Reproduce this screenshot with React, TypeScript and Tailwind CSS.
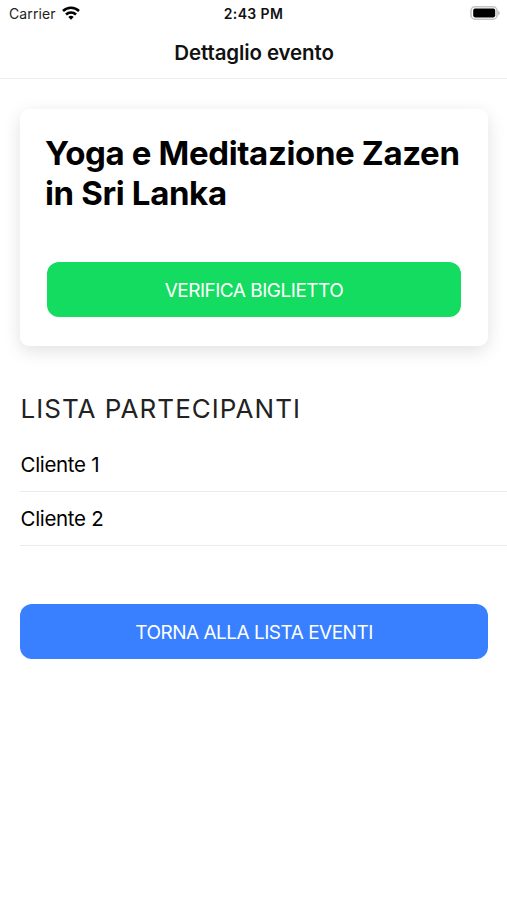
export default function App() {
  return (
    <div className="flex h-[900px] w-full flex-col overflow-hidden bg-white font-['Inter','Liberation_Sans',sans-serif] text-black">
      <header className="h-[79px] shrink-0 border-b border-[#eeeeee]">
        <div className="grid h-[26px] grid-cols-3 items-center pr-[7px] pl-[9px] text-[14px]">
          <div className="flex items-center gap-[6px]">
            <span className="pt-px tracking-[0.12px] text-[#222]">Carrier</span>
            <svg width="18" height="14" viewBox="0 0 18 14" fill="none" stroke="black" strokeWidth="2.6">
              <path d="M1 5a11.5 11.5 0 0 1 16 0" />
              <path d="M4 8.5a7.2 7.2 0 0 1 10 0" />
              <path d="M9 13.8 6.3 11.1a3.8 3.8 0 0 1 5.4 0Z" fill="black" stroke="none" />
            </svg>
          </div>
          <span className="pt-px pr-[2px] text-center font-semibold tracking-[0.4px] text-[#111]">2:43 PM</span>
          <svg className="justify-self-end" width="30" height="14" viewBox="0 0 30 14">
            <rect x="1" y="0.8" width="26" height="12.4" rx="4" fill="#fff" stroke="#c4c4c4" strokeWidth="1.6" />
            <rect x="3.2" y="2.6" width="22" height="8.8" rx="1.8" />
            <path d="M28.2 4.5c2 .8 2 4.2 0 5Z" fill="#b8b8b8" />
          </svg>
        </div>
        <h1 className="flex h-[52px] items-center justify-center pt-[3px] pl-px text-[20.5px] font-semibold tracking-[-0.12px] text-[#111]">Dettaglio evento</h1>
      </header>
      <main>
        <section className="mr-[19px] ml-5 mt-[30px] h-[237px] rounded-[9px] px-[25px] pt-6 shadow-[0_5px_18px_rgba(0,0,0,0.12)]">
          <h2 className="text-[33px] leading-[40px] font-bold tracking-[-0.36px] whitespace-nowrap">Yoga e Meditazione Zazen<br />in Sri Lanka</h2>
          <button className="mx-[2px] mt-[49px] flex h-[55px] w-[414px] items-center justify-center rounded-[12px] bg-[#14dc60] pt-[3px] text-[19px] tracking-[-0.5px] text-white">VERIFICA BIGLIETTO</button>
        </section>
        <h2 className="mt-[47px] ml-5 pl-[0.5px] text-[26px] leading-8 tracking-[1.03px] text-[#222]">LISTA PARTECIPANTI</h2>
        <ul className="mt-[13px] ml-5 text-[20.5px] tracking-[-0.32px]">
          <li className="flex h-[54px] items-center border-b border-[#ebebeb] pt-[2px] pl-[0.5px]">Cliente 1</li>
          <li className="flex h-[54px] items-center border-b border-[#ebebeb] pt-[2px] pl-[0.5px]">Cliente 2</li>
        </ul>
        <button className="mt-[58px] ml-5 flex h-[55px] w-[468px] items-center justify-center rounded-[12px] bg-[#3880ff] pt-[3px] text-[19px] tracking-[-0.5px] text-white">TORNA ALLA LISTA EVENTI</button>
      </main>
    </div>
  )
}
